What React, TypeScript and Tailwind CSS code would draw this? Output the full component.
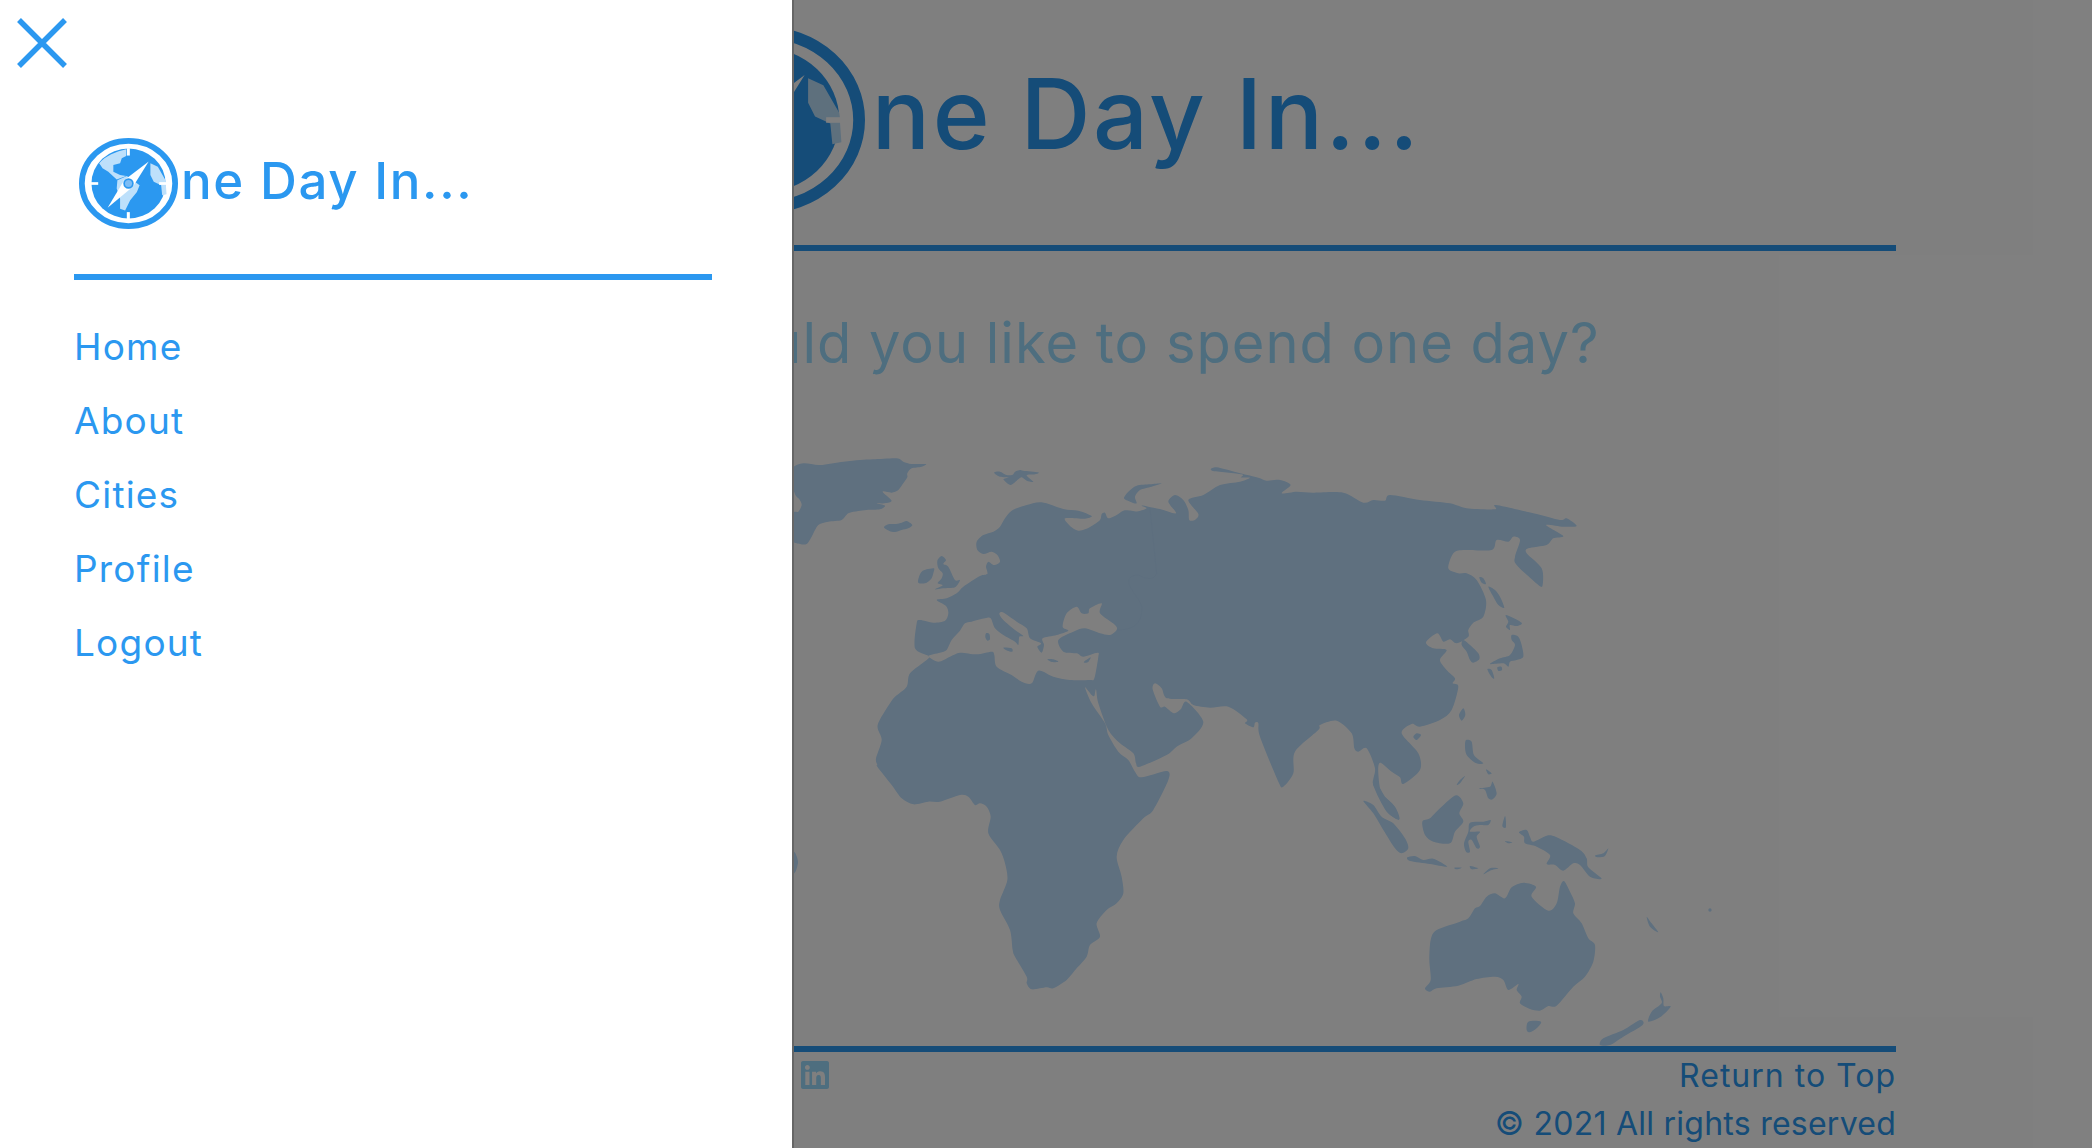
import { FaLinkedin } from "react-icons/fa";

// catmull-rom through a compact "x,y x,y" list, closed
function smooth(list: string) {
  const pts = list
    .trim()
    .split(/\s+/)
    .map((p) => p.split(",").map(Number));
  const n = pts.length;
  let d = `M${pts[0][0]},${pts[0][1]}`;
  for (let i = 0; i < n; i++) {
    const p0 = pts[(i - 1 + n) % n];
    const p1 = pts[i];
    const p2 = pts[(i + 1) % n];
    const p3 = pts[(i + 2) % n];
    const c1x = p1[0] + (p2[0] - p0[0]) / 7;
    const c1y = p1[1] + (p2[1] - p0[1]) / 7;
    const c2x = p2[0] - (p3[0] - p1[0]) / 7;
    const c2y = p2[1] - (p3[1] - p1[1]) / 7;
    d += `C${c1x.toFixed(1)},${c1y.toFixed(1)} ${c2x.toFixed(1)},${c2y.toFixed(1)} ${p2[0]},${p2[1]}`;
  }
  return d + "Z";
}

const east = (list: string, dx: number, dy = 0) =>
  list
    .trim()
    .split(/\s+/)
    .map((p) => {
      const [x, y] = p.split(",").map(Number);
      return `${x + dx},${y + dy}`;
    })
    .join(" ");

// afro-eurasia outline, going clockwise from Gibraltar
const mainland = [
  "475,648 435,625 440,550 450,540 490,548 525,542 535,520 528,498 500,480 530,475 560,460 580,440 630,408 652,402 648,380 655,365 672,375 690,365 682,345 665,335 640,342 622,330 620,305 640,285 670,275 690,260 705,235 725,212 770,195 815,187 880,207 925,212 965,228 945,236 885,235 905,262 925,272 945,268 965,258 990,240 995,222 1005,218 1015,235 1040,225 1060,212 1085,212 1105,214 1130,205 1115,197 1135,200 1170,207 1218,220 1195,185 1215,165 1240,180 1255,210 1258,240 1275,240 1285,222 1255,180 1300,165",
  east(
    "60,135 120,125 150,113 122,112 125,103 36,92 50,82 120,100 175,113 200,122 240,120 272,135 245,160 290,155 340,158 430,158 490,188 520,180 555,182 570,165 660,180 750,190 800,205 885,208 888,195 1000,220 1080,240 1100,235 1130,258 1090,260 1038,255 1090,288 1060,295 1040,315 985,325 980,340 1025,385 1028,435 1015,435 950,375 945,350 960,300 940,290 925,305 890,300 875,330 790,330 760,340 745,385 775,400 800,400 830,420 858,480 850,530 820,548 805,570 805,590 770,610 750,598 730,605 712,580 678,607 700,625 740,630 720,660 740,690 765,715 758,730 775,740 755,810 720,840 660,860 635,852 605,880 655,940 660,990 610,1032 600,1012 575,995 540,968 535,1000 545,1060 585,1100 598,1137 560,1115 520,1035 525,985 500,925 475,935 463,925 455,880 410,842 360,855 355,870 285,935 280,1000 250,1040 235,1025 180,890 175,850 165,848 160,862 135,850 140,838 85,800",
    1290,
  ),
  "1320,803 1270,795 1250,778 1190,775 1175,745 1155,730 1148,748 1170,800 1185,800 1212,820 1232,808 1250,785 1300,845 1265,895 1220,920 1190,945 1110,980 1098,970 1090,940 1050,910 1015,870 985,790 978,748 973,768 965,765 945,742 965,790 1005,850 1015,885 1045,935 1075,960 1095,995 1115,1012 1190,993",
  east(
    "925,60 880,150 850,175 790,240 770,290 785,350 790,400 770,430 740,450 710,490 720,530 690,555 680,590 650,625 620,660 580,685 560,682 515,688 500,670 500,650 465,590 458,570 450,510 420,450 420,420 442,360 435,310 420,270 385,220 392,170 380,140 360,130 345,135 325,110 300,105 240,125 205,125 160,133 125,115 95,75 52,20",
    270,
    960,
  ),
  "322,975 318,955 335,900 323,855 360,790 375,770 410,740 420,700 470,660",
].join(" ");

// mediterranean + black sea
const medSea = [
  "475,648 510,638 530,630 545,600",
  east(
    "0,92 15,70 35,65 75,55 92,55 105,85 130,105 165,125 175,135 178,110 190,108 165,90 130,60 118,42 128,37 170,65 200,85 210,115 243,130 232,140 245,158 252,135 248,115 290,105 325,92 308,80 320,40 350,20 365,40 385,40 390,25 425,10 420,40 465,75 470,90 450,105 420,100 375,85 340,95 295,120 310,155 350,160 370,170 412,158 415,170 403,235 390,240 330,240 280,230 235,212 215,250 185,245 155,225 110,200 103,165 95,155 50,163 0,158",
    570,
    480,
  ),
  "540,650 505,665",
].join(" ");

const islands = [
  "68,85 100,70 150,75 220,65 270,60 310,58 380,55 400,65 425,72 468,72 455,80 425,85 412,100 412,112 400,130 385,150 365,158 338,155 365,182 345,190 320,190 345,197 330,208 290,210 265,213 235,220 215,240 175,245 145,255 125,290 110,312 90,312 68,300 68,222 85,215 95,195 88,178 76,165 68,135",
  "66,1236 76,1240 84,1266 76,1296 66,1296",
  "342,262 355,253 378,252 395,248 410,243 427,255 415,265 395,270 375,276 358,273",
  "672,98 690,95 710,105 728,104 735,95 750,90 760,92 805,97 795,103 770,106 790,125 770,122 755,112 745,118 722,135 700,118 715,112 690,110",
  "445,428 447,410 455,395 470,388 492,385 490,400 485,415 478,422 465,430",
  "502,362 515,348 528,360 520,372 535,380 555,420 570,420 555,442 520,445 495,448 518,436 503,430 515,415 518,400 505,385",
  east("78,100 88,102 90,118 82,122 76,112", 570, 480),
  east("130,143 155,145 157,155 142,152", 570, 480),
  east("262,178 280,178 295,185 275,186", 570, 480),
  east("372,185 392,172 385,186 375,188", 570, 480),
  east("12,100 25,80 50,62 90,58 125,55 95,65 60,75 45,95 50,115 30,110", 1050, 75),
];

// kept in the east-zoom coordinates
const asiaIslands = [
  "838,412 850,415 858,432 845,428",
  "865,440 885,450 900,470 913,503 895,495 880,470",
  "918,525 965,548 950,558 930,555 930,570 918,560 925,545",
  "935,585 955,590 965,615 970,650 950,660 930,665 925,680 910,670 870,672 900,655 930,645 945,615 935,600",
  "892,682 904,680 906,690 895,693",
  "862,688 875,690 883,715 875,712",
  "790,600 810,615 835,640 838,658 820,668 810,660 800,635 785,615",
  "790,805 796,825 785,842 777,825",
  "798,900 815,905 822,945 850,970 825,968 800,945 795,920",
  "858,988 875,1000 865,1003",
  "795,1008 780,1030 770,1035 780,1020",
  "838,1045 870,1040 878,1025 890,1060 878,1078 865,1075 855,1050",
  "650,880 663,885 650,900 640,890",
];

// kept in the oceania-zoom coordinates
const oceania = [
  "70,63 100,75 125,110 160,130 195,175 205,205 185,220 165,205 130,150 100,100",
  "100,0 120,25 135,50 160,75 178,118 160,112 140,90 130,50 102,20",
  "348,46 370,70 358,100 370,125 345,155 330,190 280,185 255,165 247,125 270,115 300,85",
  "390,128 430,125 452,120 445,135 420,135 400,140 390,155 420,155 410,170 420,200 410,205 395,180 385,185 390,215 378,215 372,190 385,155",
  "495,108 498,125 497,143 487,138",
  "202,232 225,228 250,240 280,236 322,260 270,252 210,243",
  "343,263 365,263 350,268",
  "390,258 415,265 395,268",
  "430,283 450,265 475,265 450,272",
  "495,183 517,187 505,190",
  "537,157 560,150 570,170 580,185 620,167 650,172 720,210 740,235 745,262 785,296 750,290 720,255 700,250 670,272 645,255 620,252 630,225 590,200 555,190 552,170",
  "765,227 790,220 805,205 795,228 775,232",
  "672,303 690,335 705,370 700,400 725,430 745,475 765,495 760,545 735,590 700,620 650,677 625,678 600,692 570,687 540,670 545,650 530,630 535,612 505,630 490,600 465,590 410,597 355,617 290,625 270,635 255,625 272,600 268,540 272,480 290,450 360,425 385,415 405,385 420,378 440,350 465,340 495,355 515,322 550,308 588,320 575,350 625,392 650,370 660,320",
  "565,725 603,725 590,745 570,757 560,750",
  "962,637 970,655 972,678 992,680 960,712 925,725 935,695 965,670 960,650",
  "900,720 908,735 850,770 810,795 780,795 790,775 850,750",
  "920,410 935,430 955,457 930,440",
];

function WorldMap() {
  return (
    <svg viewBox="196 379 1700 667" className="block w-[1700px] h-[667px]">
      <g transform="translate(770 440) scale(0.33333)" fill="#bee0ff">
        <path fillRule="evenodd" d={smooth(mainland) + smooth(medSea)} />
        {islands.map((p, i) => (
          <path key={i} d={smooth(p)} />
        ))}
        <g transform="translate(1290 0)">
          {asiaIslands.map((p, i) => (
            <path key={i} d={smooth(p)} />
          ))}
        </g>
        <g transform="translate(1710 1020)">
          {oceania.map((p, i) => (
            <path key={i} d={smooth(p)} />
          ))}
        </g>
        <ellipse cx="2820" cy="1410" rx="5" ry="5" />
        <path
          d="M1140,205 L1160,400 C1150,425 1125,415 1105,405 C1085,405 1070,415 1078,435 C1095,470 1120,490 1115,510 C1115,550 1090,570 1040,570"
          fill="none"
          stroke="#b8daf9"
          strokeWidth="1.5"
        />
      </g>
    </svg>
  );
}

function Logo({ className }: { className: string }) {
  return (
    <svg viewBox="28 25 294 270" className={className}>
      <ellipse cx="175" cy="160" rx="138.5" ry="126.5" fill="#fff" stroke="#2b98f0" strokeWidth="17" />
      <ellipse cx="175" cy="160" rx="110" ry="104" fill="#2b98f0" />
      <path d="M88,100 C105,78 140,64 168,58 L168,78 L155,85 L150,100 L130,105 L130,125 L150,135 L168,138 L140,148 L115,125 L98,115 Z" fill="#bde0fb" />
      <path d="M142,150 L170,138 L208,165 L200,185 L180,210 L165,240 L150,235 L150,205 L140,175 Z" fill="#bde0fb" />
      <path d="M240,100 L262,110 L285,150 L288,192 L275,195 L272,165 L250,155 L240,135 Z" fill="#bde0fb" />
      <rect x="170" y="55" width="9" height="22" fill="#fff" />
      <rect x="170" y="245" width="9" height="22" fill="#fff" />
      <rect x="63" y="156" width="22" height="8" fill="#fff" />
      <rect x="266" y="156" width="22" height="8" fill="#fff" />
      <polygon points="235,95 188,170 113,232 162,150" fill="#fff" />
      <circle cx="175" cy="160" r="13" fill="#7dbdf5" stroke="#2b98f0" strokeWidth="5" />
    </svg>
  );
}

function Sidebar() {
  const links = ["Home", "About", "Cities", "Profile", "Logout"];

  return (
    <aside className="absolute left-0 top-0 h-full w-[794px] bg-white border-r-2 border-[#666666]">
      <button className="block ml-[17px] mt-[18px]">
        <svg viewBox="0 0 50 50" className="block w-[50px] h-[50px]">
          <path d="M2,2 L48,48 M48,2 L2,48" stroke="#2b98f0" strokeWidth="5.5" fill="none" />
        </svg>
      </button>

      <div className="flex items-center h-[91px] ml-[79px] mt-[70px]">
        <Logo className="w-[99px] h-[91px] shrink-0" />
        <span className="ml-[3px] mb-[5px] text-[51px] leading-[86px] tracking-[1.6px] text-[#2b98f0] font-medium">
          ne Day In...
        </span>
      </div>

      <div className="ml-[74px] mt-[45px] w-[638px] h-[6px] bg-[#2b98f0]" />

      <nav className="flex flex-col mt-[30px] ml-[74px]">
        {links.map((link) => (
          <a key={link} className="text-[37px] leading-[74px] tracking-[1.2px] text-[#2b98f0]">
            {link}
          </a>
        ))}
      </nav>
    </aside>
  );
}

export default function App() {
  return (
    <div className="relative h-[1148px] overflow-hidden bg-white font-['Inter',sans-serif]">
      <div className="w-[1700px] mx-auto">
        <header className="flex items-center justify-center h-[245px] pb-[5px] pr-[10px]">
          <Logo className="w-[204px] h-[190px] shrink-0" />
          <span className="ml-[7px] mb-[12px] text-[97px] leading-[182px] tracking-[2.5px] text-[#2b98f0] font-medium">
            ne Day In...
          </span>
        </header>
        <div className="h-[6px] bg-[#2b98f0]" />

        <h2 className="mt-[60px] mb-[4px] text-center text-[56px] leading-[64px] tracking-[1px] text-[#9cdcff]">
          Where would you like to spend one day?
        </h2>

        <WorldMap />

        <div className="h-[6px] bg-[#2b98f0]" />
        <footer className="flex justify-between">
          <div className="ml-[603px] mt-[7px]">
            <FaLinkedin className="w-[32px] h-[32px] text-[#9cdcff]" />
          </div>
          <div className="flex flex-col items-end text-[32px] leading-[48px] text-[#2b98f0]">
            <a className="tracking-[1px]">Return to Top</a>
            <span className="tracking-[0.25px]">© 2021 All rights reserved</span>
          </div>
        </footer>
      </div>

      <div className="absolute inset-0 bg-black/50" />
      <Sidebar />
    </div>
  );
}
